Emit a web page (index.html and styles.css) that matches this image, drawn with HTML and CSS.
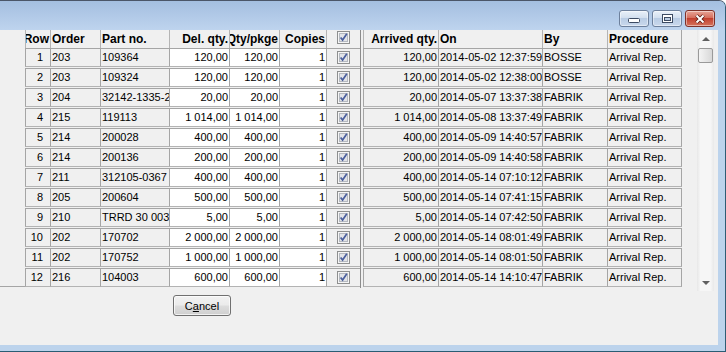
FILE: index.html
```html
<!DOCTYPE html>
<html lang="en">

<head>
    <meta charset="UTF-8" />
    <title>Arrival report</title>
    <link rel="stylesheet" href="styles.css">
</head>

<body>
    <div class="window">
        <!-- Title bar with the window buttons -->
        <div class="titlebar">
            <div class="wbtn wbtn-min">
                <svg width="12" height="5" viewBox="0 0 12 5"><rect x="0.5" y="0.5" width="11" height="4" rx="1" fill="#fff" stroke="#3c4b63"/></svg>
            </div>
            <div class="wbtn">
                <svg width="11" height="9" viewBox="0 0 11 9"><rect x="0.5" y="0.5" width="10" height="8" fill="#fff" stroke="#3c4b63"/><rect x="2.5" y="3.5" width="6" height="3" fill="#b9cbe2" stroke="#3c4b63"/></svg>
            </div>
            <div class="wbtn wbtn-close">
                <svg width="12" height="10" viewBox="0 0 12 10"><path d="M2.5 1.5 L9.5 8.5 M9.5 1.5 L2.5 8.5" stroke="#5a1a12" stroke-width="3.6"/><path d="M2.5 1.5 L9.5 8.5 M9.5 1.5 L2.5 8.5" stroke="#fff" stroke-width="2"/></svg>
            </div>
        </div>

        <div class="frame">
            <div class="client">
                <div class="grid-area">
                    <table class="grid">
                        <colgroup>
                            <col style="width:25px">
                            <col style="width:25px">
                            <col style="width:50px">
                            <col style="width:69px">
                            <col style="width:60px">
                            <col style="width:50px">
                            <col style="width:47px">
                            <col style="width:34px">
                            <col style="width:3px">
                            <col style="width:75px">
                            <col style="width:104px">
                            <col style="width:65px">
                            <col style="width:75px">
                        </colgroup>
                        <thead>
                            <tr>
                                <th class="blank"></th>
                                <th><div class="head right">Row</div></th>
                                <th><div class="head">Order</div></th>
                                <th><div class="head">Part no.</div></th>
                                <th><div class="head right">Del. qty.</div></th>
                                <th><div class="head right">Qty/pkge</div></th>
                                <th><div class="head right">Copies</div></th>
                                <th><div class="head center"><span class="chk"></span></div></th>
                                <th class="divider"><div class="split"></div></th>
                                <th><div class="head right">Arrived qty.</div></th>
                                <th><div class="head">On</div></th>
                                <th><div class="head">By</div></th>
                                <th><div class="head last">Procedure</div></th>
                            </tr>
                        </thead>
                        <tbody id="rows"></tbody>
                    </table>

                    <div class="vscroll">
                        <div class="arrow"><span class="tri-up"></span></div>
                        <div class="track"><div class="thumb"></div></div>
                        <div class="arrow"><span class="tri-down"></span></div>
                    </div>
                </div>

                <div class="footer">
                    <button class="btn">C<u>a</u>ncel</button>
                </div>
            </div>
        </div>
    </div>

    <script>
        // Arrival rows
        const rows = [
            [1, '203', '109364', '120,00', '120,00', '1', '120,00', '2014-05-02 12:37:59', 'BOSSE'],
            [2, '203', '109324', '120,00', '120,00', '1', '120,00', '2014-05-02 12:38:00', 'BOSSE'],
            [3, '204', '32142-1335-2', '20,00', '20,00', '1', '20,00', '2014-05-07 13:37:38', 'FABRIK'],
            [4, '215', '119113', '1 014,00', '1 014,00', '1', '1 014,00', '2014-05-08 13:37:49', 'FABRIK'],
            [5, '214', '200028', '400,00', '400,00', '1', '400,00', '2014-05-09 14:40:57', 'FABRIK'],
            [6, '214', '200136', '200,00', '200,00', '1', '200,00', '2014-05-09 14:40:58', 'FABRIK'],
            [7, '211', '312105-0367', '400,00', '400,00', '1', '400,00', '2014-05-14 07:10:12', 'FABRIK'],
            [8, '205', '200604', '500,00', '500,00', '1', '500,00', '2014-05-14 07:41:15', 'FABRIK'],
            [9, '210', 'TRRD 30 003', '5,00', '5,00', '1', '5,00', '2014-05-14 07:42:50', 'FABRIK'],
            [10, '202', '170702', '2 000,00', '2 000,00', '1', '2 000,00', '2014-05-14 08:01:49', 'FABRIK'],
            [11, '202', '170752', '1 000,00', '1 000,00', '1', '1 000,00', '2014-05-14 08:01:50', 'FABRIK'],
            [12, '216', '104003', '600,00', '600,00', '1', '600,00', '2014-05-14 14:10:47', 'FABRIK']
        ];

        // Checkbox drawn once, reused in every row
        const checkbox = '<svg width="13" height="13" viewBox="0 0 13 13">' +
            '<rect x="0.5" y="0.5" width="12" height="12" fill="#f5f5f5" stroke="#8e8f8f"/>' +
            '<rect x="2.5" y="2.5" width="8" height="8" fill="#e2e4e8" stroke="#b5b9c0"/>' +
            '<path d="M3.6 6.4 L5.6 9 L9.8 2.8" fill="none" stroke="#4b5f9e" stroke-width="1.7"/></svg>';

        document.querySelectorAll('.chk').forEach(function (el) {
            el.innerHTML = checkbox;
        });

        const body = document.getElementById('rows');
        rows.forEach(function (r, i) {
            const tr = document.createElement('tr');
            const last = i === rows.length - 1 ? ' bottom' : '';
            tr.innerHTML =
                '<td><div class="edge' + last + '"></div></td>' +
                '<td><div class="box right rowno">' + r[0] + '</div></td>' +
                '<td><div class="box">' + r[1] + '</div></td>' +
                '<td><div class="box">' + r[2] + '</div></td>' +
                '<td><div class="box right edit">' + r[3] + '</div></td>' +
                '<td><div class="box right edit">' + r[4] + '</div></td>' +
                '<td><div class="box right edit">' + r[5] + '</div></td>' +
                '<td><div class="box center">' + checkbox + '</div></td>' +
                '<td class="divider"><div class="split"></div></td>' +
                '<td><div class="box right">' + r[6] + '</div></td>' +
                '<td><div class="box">' + r[7] + '</div></td>' +
                '<td><div class="box">' + r[8] + '</div></td>' +
                '<td><div class="box last">Arrival Rep.</div></td>';
            body.appendChild(tr);
        });
    </script>
</body>

</html>
```

FILE: styles.css
```css
html,
body {
    margin: 0;
    width: 726px;
    height: 352px;
    overflow: hidden;
    font-family: 'Liberation Sans', Arial, sans-serif;
    font-size: 11px;
    color: #000;
}

/* Window chrome */
.window {
    width: 726px;
    height: 352px;
    box-sizing: border-box;
    display: flex;
    flex-direction: column;
    background-color: #bcd3ec;
    border-top: 1px solid #4b5668;
    border-right: 1px solid #2f5d75;
    border-bottom: 1px solid #2b5c73;
    border-top-right-radius: 7px;
    overflow: hidden;
}

.titlebar {
    height: 29px;
    box-sizing: border-box;
    padding: 9px 10px 0 0;
    display: flex;
    justify-content: flex-end;
    align-items: flex-start;
    gap: 3px;
    background: linear-gradient(to bottom, #a4bfe0 0%, #b1c9e7 50%, #bed4ee 100%);
}

.wbtn {
    width: 30px;
    height: 17px;
    box-sizing: border-box;
    border: 1px solid #6d809c;
    border-radius: 3px;
    display: flex;
    align-items: center;
    justify-content: center;
    background: linear-gradient(to bottom, #e9f0f9 0%, #d2dfef 45%, #b9cce4 50%, #c9d8ec 100%);
    box-shadow: inset 0 0 0 1px rgba(255, 255, 255, 0.45);
}

.wbtn-min {
    align-items: flex-end;
    padding-bottom: 3px;
}

.wbtn-close {
    border-color: #7e3129;
    background: linear-gradient(to bottom, #e7a597 0%, #d66f5e 45%, #c2402f 50%, #d6735c 100%);
}

.frame {
    flex: 1;
    display: flex;
    padding: 0 7px 6px 0;
}

.client {
    flex: 1;
    display: flex;
    flex-direction: column;
    background-color: #f0f0f0;
}

/* Grid */
.grid-area {
    display: flex;
    align-items: flex-start;
    gap: 15px;
}

.grid {
    width: 682px;
    table-layout: fixed;
    border-collapse: separate;
    border-spacing: 0;
}

.grid th,
.grid td {
    padding: 0;
    vertical-align: top;
}

.grid td {
    padding-bottom: 1px;
}

.head {
    height: 18px;
    line-height: 18px;
    box-sizing: border-box;
    border-left: 1px solid #b4b4b4;
    padding: 0 1px;
    font-size: 12px;
    font-weight: bold;
    white-space: nowrap;
    overflow: hidden;
    display: flex;
}

.head.right {
    justify-content: flex-end;
}

.head.center {
    justify-content: center;
    align-items: flex-start;
    padding-top: 1px;
}

.head .chk {
    display: block;
    height: 13px;
}

.head.last,
.box.last {
    border-right: 1px solid #a5a5a5;
}

.box {
    height: 17px;
    line-height: 17px;
    border: 1px solid #a5a5a5;
    border-right: 0;
    border-bottom-color: #b3b3b3;
    padding: 0 1px;
    white-space: nowrap;
    overflow: hidden;
    display: flex;
}

.box.right {
    justify-content: flex-end;
}

.box.center {
    justify-content: center;
    align-items: center;
}

.box.center svg {
    display: block;
}

.box.rowno {
    padding-right: 7px;
}

.box.edit {
    background-color: #fff;
}

.edge {
    height: 19px;
}

.edge.bottom {
    border-bottom: 1px solid #a5a5a5;
    height: 18px;
}

.divider {
    padding-bottom: 0 !important;
}

.split {
    height: 18px;
    border-left: 1px solid #8c8c8c;
}

td.divider .split {
    height: 20px;
}

/* Vertical scrollbar */
.vscroll {
    width: 17px;
    height: 261px;
    display: flex;
    flex-direction: column;
    background: linear-gradient(to right, #e7e7e7, #f6f6f6 20%, #f6f6f6 80%, #e9e9e9);
}

.arrow {
    height: 17px;
    display: flex;
    align-items: center;
    justify-content: center;
}

.tri-up {
    width: 0;
    height: 0;
    border-left: 4px solid transparent;
    border-right: 4px solid transparent;
    border-bottom: 4px solid #606060;
}

.tri-down {
    width: 0;
    height: 0;
    border-left: 4px solid transparent;
    border-right: 4px solid transparent;
    border-top: 4px solid #606060;
}

.track {
    flex: 1;
    padding: 1px 1px 0;
}

.thumb {
    height: 15px;
    box-sizing: border-box;
    border: 1px solid #9a9a9a;
    border-radius: 2px;
    background: linear-gradient(to right, #f4f4f4, #e6e6e6 50%, #d8d8d8);
}

/* Footer with button */
.footer {
    padding: 4px 0 0 173px;
}

.btn {
    width: 58px;
    height: 21px;
    padding: 0;
    border: 1px solid #707070;
    border-radius: 3px;
    font-family: 'Liberation Sans', Arial, sans-serif;
    font-size: 11px;
    color: #000;
    background: linear-gradient(to bottom, #f2f2f2 0%, #ebebeb 48%, #dddddd 52%, #cfcfcf 100%);
    box-shadow: inset 0 0 0 1px rgba(255, 255, 255, 0.7);
}
```
